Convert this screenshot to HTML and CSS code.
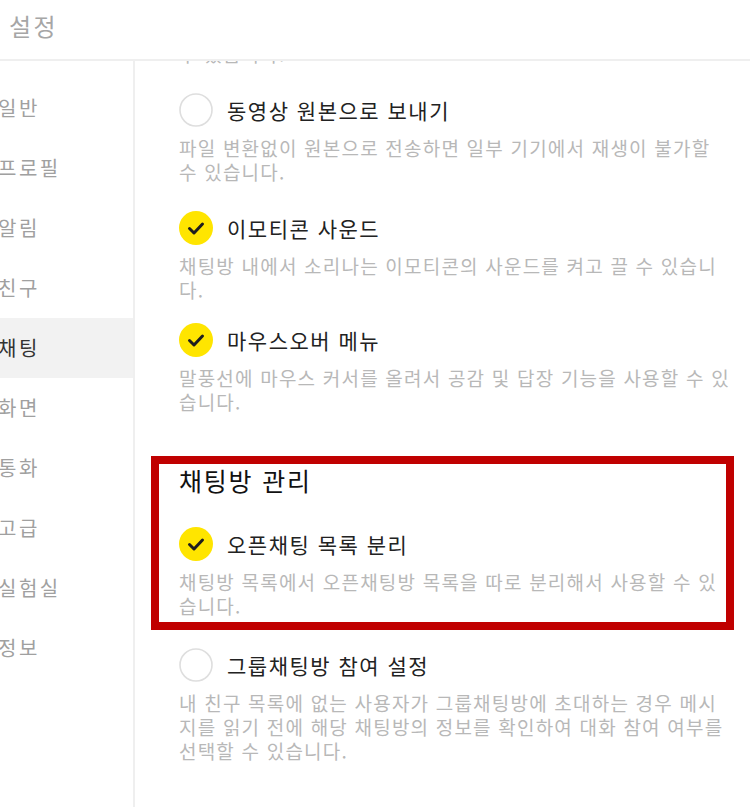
FILE: index.html
```html
<!DOCTYPE html>
<html lang="ko">
<head>
    <meta charset="UTF-8">
    <meta name="viewport" content="width=device-width, initial-scale=1.0">
    <title>설정</title>
    <link rel="stylesheet" href="styles.css">
</head>
<body>
    <header class="top-bar">
        <h1>설정</h1>
    </header>

    <div class="settings">
        <ul class="side-menu">
            <li>일반</li>
            <li>프로필</li>
            <li>알림</li>
            <li>친구</li>
            <li class="active">채팅</li>
            <li>화면</li>
            <li>통화</li>
            <li>고급</li>
            <li>실험실</li>
            <li>정보</li>
        </ul>

        <div class="panel">
            <p class="option-desc cut">수 있습니다.</p>

            <div class="option">
                <div class="option-row">
                    <svg class="check" viewBox="0 0 34 34"><circle cx="17" cy="17" r="16" fill="#fff" stroke="#dedede" stroke-width="1.6"/></svg>
                    <span>동영상 원본으로 보내기</span>
                </div>
                <p class="option-desc">파일 변환없이 원본으로 전송하면 일부 기기에서 재생이 불가할 수 있습니다.</p>
            </div>

            <div class="option">
                <div class="option-row">
                    <svg class="check" viewBox="0 0 34 34"><circle cx="17" cy="17" r="17" fill="#ffe500"/><polyline points="10.5,17.5 15,22 23.5,13" fill="none" stroke="#1e1e1e" stroke-width="3" stroke-linecap="round" stroke-linejoin="round"/></svg>
                    <span>이모티콘 사운드</span>
                </div>
                <p class="option-desc">채팅방 내에서 소리나는 이모티콘의 사운드를 켜고 끌 수 있습니다.</p>
            </div>

            <div class="option tight">
                <div class="option-row">
                    <svg class="check" viewBox="0 0 34 34"><circle cx="17" cy="17" r="17" fill="#ffe500"/><polyline points="10.5,17.5 15,22 23.5,13" fill="none" stroke="#1e1e1e" stroke-width="3" stroke-linecap="round" stroke-linejoin="round"/></svg>
                    <span>마우스오버 메뉴</span>
                </div>
                <p class="option-desc">말풍선에 마우스 커서를 올려서 공감 및 답장 기능을 사용할 수 있습니다.</p>
            </div>

            <div class="group marked">
                <h2>채팅방 관리</h2>
                <div class="option">
                    <div class="option-row">
                        <svg class="check" viewBox="0 0 34 34"><circle cx="17" cy="17" r="17" fill="#ffe500"/><polyline points="10.5,17.5 15,22 23.5,13" fill="none" stroke="#1e1e1e" stroke-width="3" stroke-linecap="round" stroke-linejoin="round"/></svg>
                        <span>오픈채팅 목록 분리</span>
                    </div>
                    <p class="option-desc">채팅방 목록에서 오픈채팅방 목록을 따로 분리해서 사용할 수 있습니다.</p>
                </div>
            </div>

            <div class="option after-group">
                <div class="option-row">
                    <svg class="check" viewBox="0 0 34 34"><circle cx="17" cy="17" r="16" fill="#fff" stroke="#dedede" stroke-width="1.6"/></svg>
                    <span>그룹채팅방 참여 설정</span>
                </div>
                <p class="option-desc">내 친구 목록에 없는 사용자가 그룹채팅방에 초대하는 경우 메시지를 읽기 전에 해당 채팅방의 정보를 확인하여 대화 참여 여부를 선택할 수 있습니다.</p>
            </div>
        </div>
    </div>
</body>
</html>
```

FILE: styles.css
```css
body {
    font-family: 'Noto Sans CJK KR', 'Noto Sans', sans-serif;
    margin: 0;
    padding: 0;
    width: 750px;
    height: 807px;
    overflow: hidden;
    background: #fff;
    color: #222;
}
.top-bar {
    height: 61px;
    box-sizing: border-box;
    border-bottom: 2px solid #efefef;
    display: flex;
    align-items: center;
    padding: 0 0 8px 9px;
}
.top-bar h1 {
    margin: 0;
    font-size: 24px;
    font-weight: normal;
    color: #a6a6a6;
    letter-spacing: 2.5px;
}
.settings {
    display: flex;
    height: 746px;
}
.side-menu {
    list-style: none;
    margin: 0;
    padding: 17px 0 0;
    width: 133px;
    flex-shrink: 0;
    border-right: 2px solid #efefef;
}
.side-menu li {
    height: 60px;
    line-height: 60px;
    font-size: 20px;
    color: #a0a0a0;
    text-indent: -2px;
    letter-spacing: 2.5px;
}
.side-menu li.active {
    background: #f2f2f2;
    color: #333;
}
.panel {
    flex: 1;
    overflow: hidden;
    padding: 0 0 0 44px;
}
.option {
    margin-top: 27px;
    width: 553px;
}
.option.tight {
    margin-top: 21px;
}
.option.after-group {
    margin-top: 30px;
}
.option-row {
    display: flex;
    align-items: center;
    gap: 14px;
    height: 34px;
    font-size: 21px;
    color: #222;
    letter-spacing: 1.5px;
}
.check {
    width: 34px;
    height: 34px;
    flex-shrink: 0;
}
.option-desc {
    margin: 9px 0 0;
    font-size: 19px;
    line-height: 24px;
    color: #b8b8b8;
    letter-spacing: 1.2px;
}
.option-desc.cut {
    margin-top: -19px;
}
.group {
    margin-top: 49px;
}
.group h2 {
    margin: 0;
    font-size: 25px;
    font-weight: normal;
    line-height: 34px;
    color: #111;
    letter-spacing: 1.8px;
}
.group .option {
    margin-top: 30px;
}
.marked {
    position: relative;
}
.marked::after {
    content: "";
    position: absolute;
    left: -28px;
    top: -7px;
    width: 567px;
    bottom: -12px;
    border: 8px solid #c00000;
}
```
